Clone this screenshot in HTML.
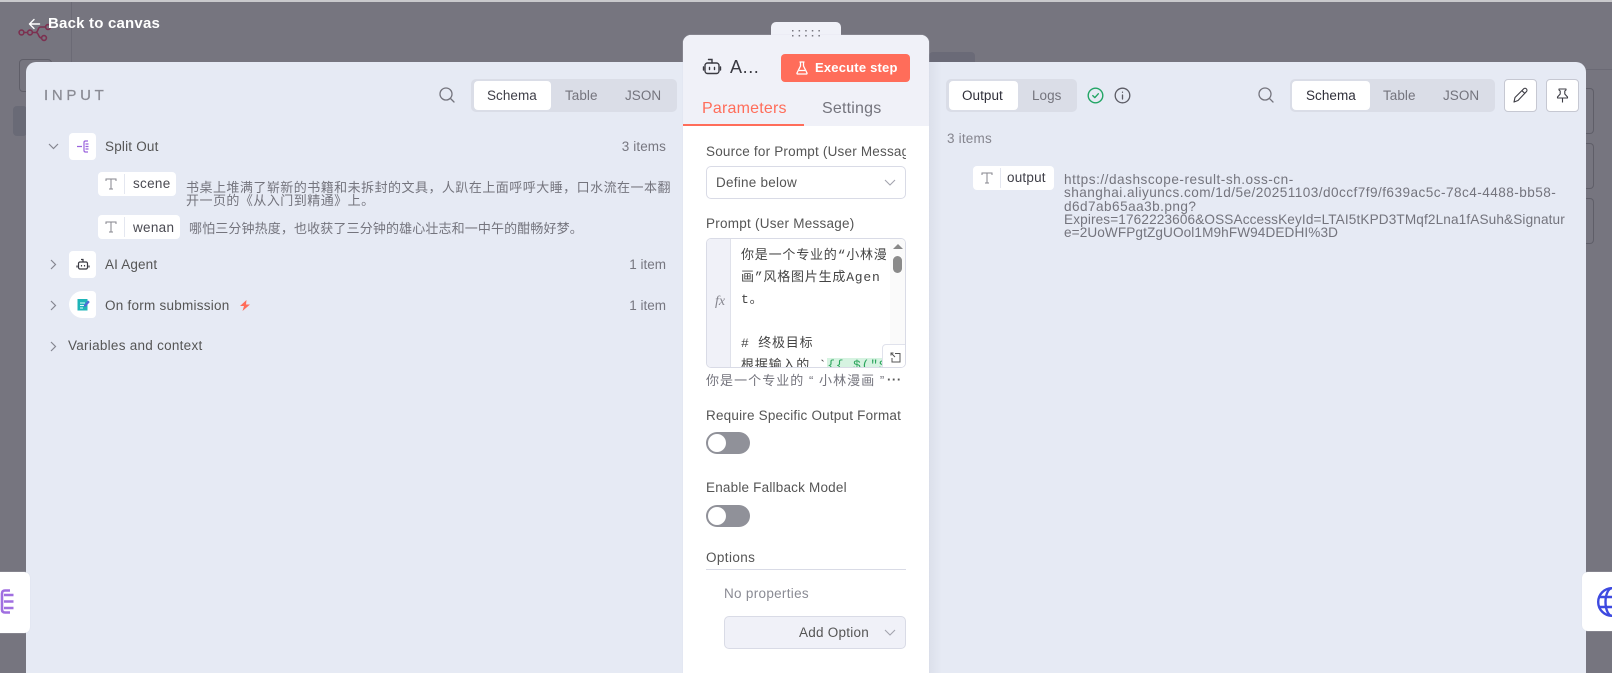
<!DOCTYPE html>
<html lang="zh">
<head>
<meta charset="utf-8">
<title>AI Agent</title>
<style>
*{box-sizing:border-box}
html,body{margin:0;padding:0;width:1612px;height:673px;overflow:hidden;background:#76757f}
body{position:relative;font-family:"Liberation Sans","Noto Sans CJK SC",sans-serif;font-size:13.5px;color:#555}
.a{position:absolute}
.t{position:absolute;white-space:nowrap;line-height:16px;margin-top:1px}
.seg{position:absolute;top:79px;height:33px;background:#dadde7;border-radius:5px}
.on{position:absolute;top:81px;height:29px;background:#fff;border-radius:4px}
.pill{position:absolute;background:#fff;border-radius:4px;height:24px}
.ib{position:absolute;left:69px;width:27px;height:27px;background:#fff;border-radius:4px}
svg{position:absolute;overflow:visible}
.cjk{position:absolute;font-family:"Liberation Sans","Noto Sans CJK SC",sans-serif;color:#74747d;font-size:13px;line-height:13px;white-space:nowrap}
.code{position:absolute;left:741px;font-family:"Liberation Mono","WenQuanYi Zen Hei",monospace;font-size:13px;line-height:22px;color:#444;white-space:nowrap;letter-spacing:.8px}
</style>
</head>
<body>
<!-- dimmed canvas -->
<div class="a" style="left:0;top:0;width:1612px;height:2px;background:#c9c9cc"></div>
<div class="a" style="left:71px;top:2px;width:1px;height:60px;background:#6b6a75"></div>
<div class="a" style="left:19px;top:59px;width:33px;height:33px;border:1px solid #5f5e68;border-radius:4px"></div>
<div class="a" style="left:13px;top:106px;width:14px;height:30px;background:#696a76;border-radius:4px"></div>
<div class="a" style="left:929px;top:52px;width:46px;height:11px;background:#6a6a77;border-radius:4px 4px 0 0"></div>
<div class="a" style="left:1586px;top:69px;width:26px;height:1px;background:#6b6a75"></div>
<div class="a" style="left:1586px;top:88px;width:8px;height:46px;border:1px solid #5f5e68;border-left:0;border-radius:0 4px 4px 0"></div>
<div class="a" style="left:1586px;top:143px;width:8px;height:46px;border:1px solid #5f5e68;border-left:0;border-radius:0 4px 4px 0"></div>
<div class="a" style="left:1586px;top:198px;width:8px;height:46px;border:1px solid #5f5e68;border-left:0;border-radius:0 4px 4px 0"></div>
<svg style="left:18px;top:22px" width="34" height="20" viewBox="0 0 34 20" fill="none" stroke="#7c3050" stroke-width="1.6"><circle cx="3.5" cy="10.5" r="2.4"/><circle cx="12" cy="10.5" r="2.4"/><circle cx="26" cy="16" r="2.4"/><circle cx="30" cy="5" r="2.4"/><path d="M6 10.500h3.500M14.500 10.500h3c3 0 2-5.500 5-5.500h5M18 10.500c3 0 2 5.500 5.500 5.500"/></svg>

<!-- back -->
<svg style="left:28px;top:18px" width="13" height="12" viewBox="0 0 13 12" fill="none" stroke="#fff" stroke-width="1.400" stroke-linecap="round" stroke-linejoin="round"><path d="M11.500 6H1.500M6 1.500 1.500 6 6 10.500"/></svg>
<div class="t" style="left:48px;top:15px;color:#fff;font-size:15px;font-weight:700;letter-spacing:.2px">Back to canvas</div>

<!-- main panel -->
<div class="a" style="left:26px;top:62px;width:1560px;height:611px;background:#e6eaf4;border-radius:10px 10px 0 0"></div>
<div class="a" style="left:928px;top:62px;width:14px;height:611px;background:linear-gradient(90deg,#dbdfea,#e6eaf4)"></div>

<!-- left header -->
<div class="t" style="left:44px;top:87px;font-size:15px;letter-spacing:3.700px;color:#8a8b94;-webkit-text-stroke:.25px #8a8b94">INPUT</div>
<svg style="left:439px;top:87px" width="16" height="16" viewBox="0 0 16 16" fill="none" stroke="#74747d" stroke-width="1.300" stroke-linecap="round"><circle cx="7" cy="7" r="6"/><path d="m11.500 11.500 3.500 3.500"/></svg>
<div class="seg" style="left:471px;width:206px"></div>
<div class="on" style="left:474px;width:77px"></div>
<div class="t" style="left:487px;top:87px;color:#3f3f48;letter-spacing:.05px">Schema</div>
<div class="t" style="left:565px;top:87px;color:#74747d;letter-spacing:.05px">Table</div>
<div class="t" style="left:625px;top:87px;color:#74747d;letter-spacing:.05px">JSON</div>

<!-- left tree -->
<svg style="left:48px;top:143px" width="11" height="7" viewBox="0 0 11 7" fill="none" stroke="#858690" stroke-width="1.200"><path d="m1 1 4.500 4.500L10 1"/></svg>
<div class="ib" style="top:133px"></div>
<svg style="left:76px;top:139px" width="14" height="15" viewBox="0 0 14 15" fill="none" stroke="#9a63dd" stroke-width="1.200"><path d="M1 7.500h5M12 2H9.500Q8 2 8 3.500v8Q8 13 9.500 13H12M9.500 5H12.500M9.500 7.500H12.500M9.500 10H12.500"/></svg>
<div class="t" style="left:105px;top:138px;letter-spacing:.2px">Split Out</div>
<div class="t" style="right:946px;top:138px;color:#777780;letter-spacing:.1px">3 items</div>

<div class="pill" style="left:98px;top:172px;width:78px"></div>
<div class="a" style="left:124px;top:174px;width:1px;height:20px;background:#e4e7f0"></div>
<svg style="left:105px;top:178px" width="12" height="12" viewBox="0 0 12 12" fill="none" stroke="#85858e" stroke-width="1"><path d="M1 3V1h10v2M6 1v10M4 11h4"/></svg>
<div class="t" style="left:133px;top:175px;letter-spacing:.3px;color:#4a4a52">scene</div>
<div class="cjk" style="left:186px;top:181px;letter-spacing:.47px">书桌上堆满了崭新的书籍和未拆封的文具，人趴在上面呼呼大睡，口水流在一本翻<br>开一页的《从入门到精通》上。</div>

<div class="pill" style="left:98px;top:215px;width:82px"></div>
<div class="a" style="left:124px;top:217px;width:1px;height:20px;background:#e4e7f0"></div>
<svg style="left:105px;top:221px" width="12" height="12" viewBox="0 0 12 12" fill="none" stroke="#85858e" stroke-width="1"><path d="M1 3V1h10v2M6 1v10M4 11h4"/></svg>
<div class="t" style="left:133px;top:219px;letter-spacing:.3px;color:#4a4a52">wenan</div>
<div class="cjk" style="left:189px;top:222px;letter-spacing:.13px">哪怕三分钟热度，也收获了三分钟的雄心壮志和一中午的酣畅好梦。</div>

<svg style="left:50px;top:259px" width="7" height="11" viewBox="0 0 7 11" fill="none" stroke="#858690" stroke-width="1.200"><path d="m1 1 4.500 4.500L1 10"/></svg>
<div class="ib" style="top:251px"></div>
<svg style="left:77px;top:258px" width="12" height="13" viewBox="0 0 12 13" fill="none" stroke="#3a3a42" stroke-width="1.200"><rect x="1.500" y="4" width="9" height="7" rx="1.500"/><path d="M6 4V1.500H4M0 7.500v2M12 7.500v2M4.500 7v1.500M7.500 7v1.500"/></svg>
<div class="t" style="left:105px;top:256px;letter-spacing:.15px">AI Agent</div>
<div class="t" style="right:946px;top:256px;color:#777780">1 item</div>

<svg style="left:50px;top:300px" width="7" height="11" viewBox="0 0 7 11" fill="none" stroke="#858690" stroke-width="1.200"><path d="m1 1 4.500 4.500L1 10"/></svg>
<div class="ib" style="top:291px;border-radius:14px 4px 4px 14px"></div>
<svg style="left:77px;top:298px" width="13" height="13" viewBox="0 0 13 13"><rect x="0.500" y="1" width="10" height="11.500" fill="#1fb5b8"/><path d="M3 5h5M3 7.500h5M3 10h3" stroke="#dff" stroke-width="1"/><path d="m7 7 4-4.500 1.800 1.500-4 4.500-2 .5z" fill="#4f6ad8"/></svg>
<div class="t" style="left:105px;top:297px;letter-spacing:.25px">On form submission</div>
<svg style="left:239px;top:300px" width="12" height="11" viewBox="0 0 12 11"><path d="M7.500 0 1 6h4L3.500 11 11 4.500H7z" fill="#ff6d5a"/></svg>
<div class="t" style="right:946px;top:297px;color:#777780">1 item</div>

<svg style="left:50px;top:341px" width="7" height="11" viewBox="0 0 7 11" fill="none" stroke="#858690" stroke-width="1.200"><path d="m1 1 4.500 4.500L1 10"/></svg>
<div class="t" style="left:68px;top:337px;letter-spacing:.27px">Variables and context</div>

<!-- right header -->
<div class="seg" style="left:946px;width:131px"></div>
<div class="on" style="left:949px;width:69px"></div>
<div class="t" style="left:962px;top:87px;color:#30303a;letter-spacing:.05px">Output</div>
<div class="t" style="left:1032px;top:87px;color:#74747d;letter-spacing:.05px">Logs</div>
<svg style="left:1087px;top:87px" width="17" height="17" viewBox="0 0 17 17" fill="none" stroke="#22a565" stroke-width="1.400" stroke-linecap="round" stroke-linejoin="round"><circle cx="8.500" cy="8.500" r="7.300"/><path d="m5.800 8.600 2 2 3.500-3.800"/></svg>
<svg style="left:1114px;top:87px" width="17" height="17" viewBox="0 0 17 17" fill="none" stroke="#5b5b64" stroke-width="1.300" stroke-linecap="round"><circle cx="8.500" cy="8.500" r="7.300"/><path d="M8.500 8v4M8.500 5.200v.1"/></svg>
<svg style="left:1258px;top:87px" width="16" height="16" viewBox="0 0 16 16" fill="none" stroke="#74747d" stroke-width="1.300" stroke-linecap="round"><circle cx="7" cy="7" r="6"/><path d="m11.500 11.500 3.500 3.500"/></svg>
<div class="seg" style="left:1290px;width:205px"></div>
<div class="on" style="left:1292px;width:78px"></div>
<div class="t" style="left:1306px;top:87px;color:#30303a;letter-spacing:.05px">Schema</div>
<div class="t" style="left:1383px;top:87px;color:#74747d;letter-spacing:.05px">Table</div>
<div class="t" style="left:1443px;top:87px;color:#74747d;letter-spacing:.05px">JSON</div>
<div class="a" style="left:1504px;top:79px;width:33px;height:33px;background:#fff;border:1px solid #c6c8d2;border-radius:4px"></div>
<svg style="left:1513px;top:88px" width="15" height="15" viewBox="0 0 15 15" fill="none" stroke="#3c3c44" stroke-width="1.100" stroke-linejoin="round"><path d="M1 14l1-4.500L10.500 1a1.700 1.700 0 0 1 3 2.500L5 12.500zM9 2.800l3 2.700"/></svg>
<div class="a" style="left:1546px;top:79px;width:33px;height:33px;background:#fff;border:1px solid #c6c8d2;border-radius:4px"></div>
<svg style="left:1556px;top:88px" width="13" height="15" viewBox="0 0 13 15" fill="none" stroke="#3c3c44" stroke-width="1.100" stroke-linejoin="round"><path d="M3 1h7v1l-1.200 1v3l2.700 3v1h-10V9l2.700-3V3L3 2zM6.500 10v4.500"/></svg>
<div class="t" style="left:947px;top:130px;color:#85858e;letter-spacing:.2px">3 items</div>
<div class="pill" style="left:973px;top:166px;width:81px"></div>
<div class="a" style="left:1000px;top:168px;width:1px;height:20px;background:#e4e7f0"></div>
<svg style="left:981px;top:172px" width="12" height="12" viewBox="0 0 12 12" fill="none" stroke="#85858e" stroke-width="1"><path d="M1 3V1h10v2M6 1v10M4 11h4"/></svg>
<div class="t" style="left:1007px;top:169px;letter-spacing:.2px;color:#3f3f48">output</div>
<div class="a" style="left:1064px;top:173px;color:#74747d;font-size:13.6px;line-height:13.250px;white-space:nowrap"><span style="letter-spacing:.52px">https://dashscope-result-sh.oss-cn-</span><br><span style="letter-spacing:.45px">shanghai.aliyuncs.com/1d/5e/20251103/d0ccf7f9/f639ac5c-78c4-4488-bb58-</span><br><span style="letter-spacing:.45px">d6d7ab65aa3b.png?</span><br><span style="letter-spacing:.13px">Expires=1762223606&amp;OSSAccessKeyId=LTAI5tKPD3TMqf2Lna1fASuh&amp;Signatur</span><br><span style="letter-spacing:.1px">e=2UoWFPgtZgUOol1M9hFW94DEDHI%3D</span></div>

<!-- center node panel -->
<div class="a" style="left:771px;top:22px;width:70px;height:20px;background:#f0f1f8;border-radius:5px 5px 0 0"></div>
<div class="a" style="left:683px;top:35px;width:245.500px;height:638px;background:#fff;border-radius:8px 8px 0 0;box-shadow:0 0 1px #d4d8e2"></div>
<div class="a" style="left:683px;top:35px;width:245.500px;height:91px;background:#f0f1f8;border-radius:8px 8px 0 0"></div>
<svg style="left:792px;top:30px" width="28" height="8" viewBox="0 0 28 8" fill="#77777f"><rect x="0" y="0" width="1.500" height="1.500"/><rect x="6.600" y="0" width="1.500" height="1.500"/><rect x="13.200" y="0" width="1.500" height="1.500"/><rect x="19.800" y="0" width="1.500" height="1.500"/><rect x="26.400" y="0" width="1.500" height="1.500"/><rect x="0" y="5" width="1.500" height="1.500"/><rect x="6.600" y="5" width="1.500" height="1.500"/><rect x="13.200" y="5" width="1.500" height="1.500"/><rect x="19.800" y="5" width="1.500" height="1.500"/><rect x="26.400" y="5" width="1.500" height="1.500"/></svg>
<svg style="left:703px;top:58px" width="18" height="17" viewBox="0 0 18 17" fill="none" stroke="#3a3a42" stroke-width="1.400" stroke-linecap="round"><rect x="2" y="5" width="14" height="10.500" rx="2.500"/><path d="M9 5V1.500H5.500M.5 9v3M17.500 9v3M6.500 9.500v2M11.500 9.500v2"/></svg>
<div class="t" style="left:730px;top:57px;font-size:18px;line-height:20px;color:#3a3a42;letter-spacing:.6px;margin-top:0">A...</div>
<div class="a" style="left:781px;top:54px;width:129px;height:28px;background:#ff6d5a;border-radius:4px"></div>
<svg style="left:796px;top:61px" width="12" height="14" viewBox="0 0 12 14" fill="none" stroke="#fff" stroke-width="1.300" stroke-linejoin="round"><path d="M3.500 1h5M4.500 1v4L1 12q-.4 1 1 1h8q1.400 0 1-1L7.500 5V1M3 9.500h6"/></svg>
<div class="t" style="left:815px;top:60px;color:#fff;font-weight:700;font-size:13px;letter-spacing:.2px;margin-top:0">Execute step</div>
<div class="t" style="left:702px;top:98px;color:#ff6d5a;font-size:16px;line-height:20px;letter-spacing:.2px">Parameters</div>
<div class="t" style="left:822px;top:98px;color:#74747d;font-size:16px;line-height:20px;letter-spacing:.2px">Settings</div>
<div class="a" style="left:683px;top:124px;width:121px;height:2px;background:#ff6d5a"></div>

<div class="a" style="left:706px;top:144px;width:200px;height:16px;line-height:16px;overflow:hidden;white-space:nowrap;letter-spacing:.2px;color:#555">Source for Prompt (User Message)</div>
<div class="a" style="left:706px;top:166px;width:200px;height:33px;border:1px solid #d9dbe6;border-radius:5px;background:#fff"></div>
<div class="t" style="left:716px;top:174px;letter-spacing:.25px;color:#555">Define below</div>
<svg style="left:884px;top:179px" width="12" height="7" viewBox="0 0 12 7" fill="none" stroke="#a3a4ae" stroke-width="1.100"><path d="m1 1 5 5 5-5"/></svg>

<div class="t" style="left:706px;top:215px;letter-spacing:.25px;color:#555">Prompt (User Message)</div>
<div class="a" style="left:706px;top:238px;width:200px;height:130px;border:1px solid #d9dbe6;border-radius:5px;background:#fff;overflow:hidden">
  <div class="a" style="left:0;top:0;width:24px;height:128px;background:#f0f1f8;border-right:1px solid #dfe1ea"></div>
  <div class="a" style="left:8px;top:55px;font-family:'Liberation Serif',serif;font-style:italic;font-size:14px;line-height:16px;color:#85858e">fx</div>
  <div class="code" style="left:34px;top:6px">你是一个专业的“小林漫<br>画”风格图片生成Agen<br>t。<br><br># 终极目标<br>根据输入的 `<span style="background:#d6f3e1;color:#2ba55c">{{ $("S</span></div>
  <div class="a" style="left:183px;top:0;width:16px;height:128px;background:#fafafa"></div>
  <div class="a" style="left:186px;top:5px;width:0;height:0;border:5px solid transparent;border-top:0;border-bottom:5px solid #888"></div>
  <div class="a" style="left:186px;top:17px;width:9px;height:17px;background:#8a8a8a;border-radius:5px"></div>
  <div class="a" style="left:175px;top:105px;width:24px;height:24px;background:#fff;border:1px solid #e0e2ec;border-radius:4px 0 0 0"></div>
</div>
<svg style="left:890px;top:352px" width="11" height="11" viewBox="0 0 11 11" fill="none" stroke="#555" stroke-width="1"><path d="M1 3.500V1h2.500M1 1l4 4"/><path d="M5 1.500h5v8.500H2V6"/></svg>
<div class="t" style="left:706px;top:372px;color:#74747d;letter-spacing:1.050px;font-size:13px">你是一个专业的 “ 小林漫画 ”</div>
<div class="t" style="left:887px;top:371px;color:#555;font-size:13px;font-weight:700;letter-spacing:.6px">···</div>

<div class="t" style="left:706px;top:407px;letter-spacing:.2px;color:#555">Require Specific Output Format</div>
<div class="a" style="left:706px;top:432px;width:44px;height:22px;border-radius:11px;background:#909199"></div>
<div class="a" style="left:708px;top:434px;width:18px;height:18px;border-radius:9px;background:#fff"></div>
<div class="t" style="left:706px;top:479px;letter-spacing:.2px;color:#555">Enable Fallback Model</div>
<div class="a" style="left:706px;top:505px;width:44px;height:22px;border-radius:11px;background:#909199"></div>
<div class="a" style="left:708px;top:507px;width:18px;height:18px;border-radius:9px;background:#fff"></div>
<div class="t" style="left:706px;top:549px;letter-spacing:.4px;color:#555">Options</div>
<div class="a" style="left:706px;top:569px;width:200px;height:1px;background:#d9dbe6"></div>
<div class="t" style="left:724px;top:585px;letter-spacing:.3px;color:#8a8b94">No properties</div>
<div class="a" style="left:724px;top:616px;width:182px;height:33px;background:#f0f1f8;border:1px solid #d9dbe6;border-radius:5px"></div>
<div class="t" style="left:799px;top:624px;letter-spacing:.25px;color:#555">Add Option</div>
<svg style="left:884px;top:629px" width="12" height="7" viewBox="0 0 12 7" fill="none" stroke="#a3a4ae" stroke-width="1.100"><path d="m1 1 5 5 5-5"/></svg>

<!-- side widgets -->
<div class="a" style="left:-10px;top:572px;width:40px;height:61px;background:#fff;border-radius:6px;box-shadow:0 0 1px #d4d8e2"></div>
<svg style="left:0;top:589px" width="14" height="26" viewBox="0 0 14 26" fill="none" stroke="#a06fe0" stroke-width="2.600"><path d="M10 1.500H5Q2 1.500 2 4.500V20.500Q2 23.500 5 23.500H10M4 6H13.500M4 12.500H13.500M4 19H13.500"/></svg>
<div class="a" style="left:1582px;top:572px;width:40px;height:59px;background:#fff;border-radius:6px;box-shadow:0 0 1px #d4d8e2"></div>
<svg style="left:1597px;top:587px;width:30px;height:30px" viewBox="0 0 30 30" fill="none" stroke="#3d49e0" stroke-width="2.400"><circle cx="15" cy="15" r="13.800"/><ellipse cx="15" cy="15" rx="6.500" ry="13.800"/><path d="M2 10h26M2 20h26"/></svg>
</body>
</html>
